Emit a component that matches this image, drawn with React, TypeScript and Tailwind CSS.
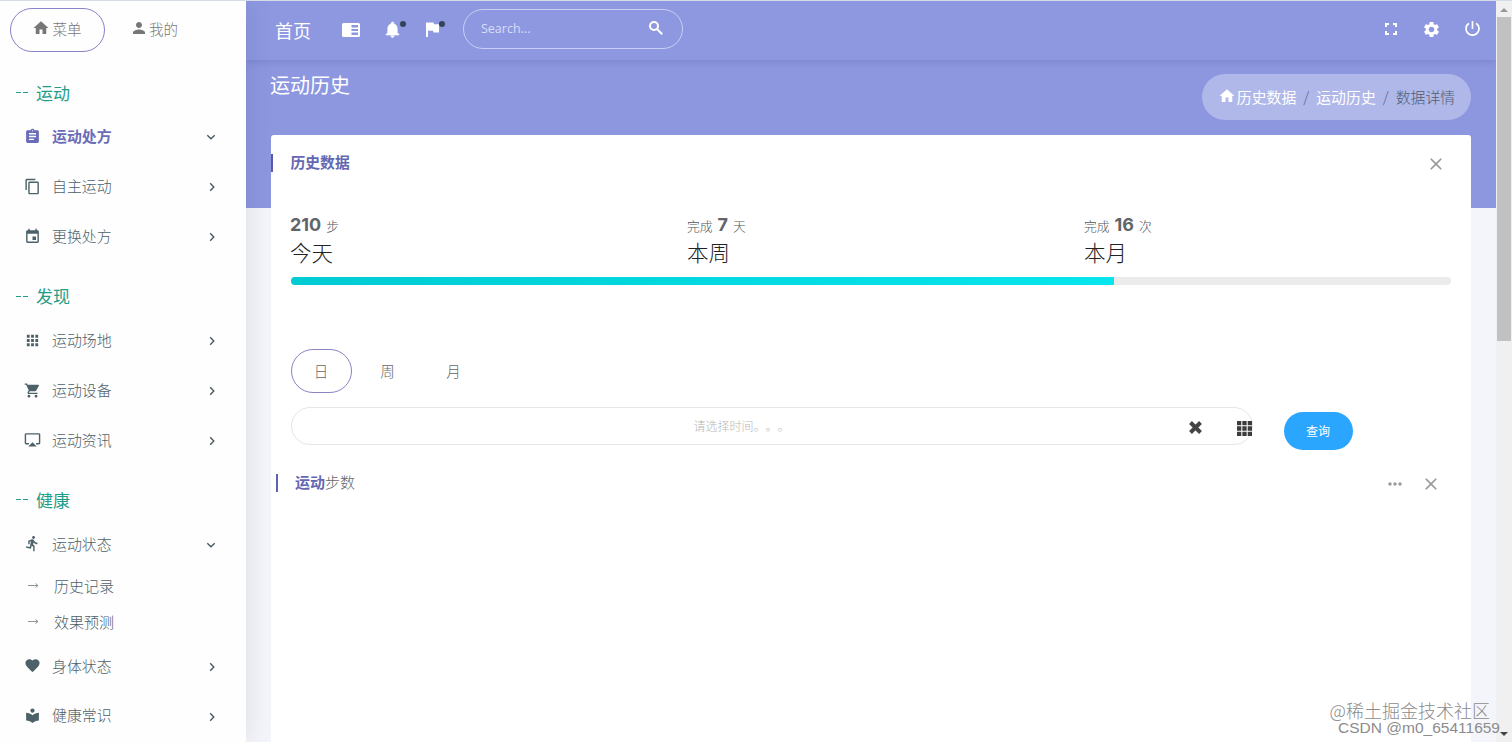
import { ReactNode } from 'react'
import { IconType } from 'react-icons'
import {
  MdAirplay,
  MdApps,
  MdAssignment,
  MdClose,
  MdContentCopy,
  MdDirectionsRun,
  MdEvent,
  MdFavorite,
  MdHome,
  MdLocalLibrary,
  MdMoreHoriz,
  MdNotifications,
  MdPerson,
  MdSettings,
  MdShoppingCart,
} from 'react-icons/md'

type MenuItem = {
  label: string
  icon: IconType
  active?: boolean
  open?: boolean
  children?: string[]
}

type MenuSection = { title: string; items: MenuItem[] }

const sections: MenuSection[] = [
  {
    title: '运动',
    items: [
      { label: '运动处方', icon: MdAssignment, active: true, open: true },
      { label: '自主运动', icon: MdContentCopy },
      { label: '更换处方', icon: MdEvent },
    ],
  },
  {
    title: '发现',
    items: [
      { label: '运动场地', icon: MdApps },
      { label: '运动设备', icon: MdShoppingCart },
      { label: '运动资讯', icon: MdAirplay },
    ],
  },
  {
    title: '健康',
    items: [
      { label: '运动状态', icon: MdDirectionsRun, open: true, children: ['历史记录', '效果预测'] },
      { label: '身体状态', icon: MdFavorite },
      { label: '健康常识', icon: MdLocalLibrary },
    ],
  },
]

const stats = [
  { before: '', value: '210', unit: '步', title: '今天' },
  { before: '完成', value: '7', unit: '天', title: '本周' },
  { before: '完成', value: '16', unit: '次', title: '本月' },
]

const progress = 71

// Small arrow on the right of a menu row
const Chevron = ({ open }: { open?: boolean }) => (
  <svg
    width="10"
    height="10"
    viewBox="0 0 10 10"
    fill="none"
    stroke="#4a5a60"
    strokeWidth="1.4"
    className={open ? 'mr-[30px] mt-[2px]' : 'mr-[29px] mt-[2px]'}
  >
    <path d={open ? 'M1.3 3.2 5 6.8 8.7 3.2' : 'M3.2 1.3 6.8 5 3.2 8.7'} />
  </svg>
)

const MenuRow = ({ item }: { item: MenuItem }) => {
  const Icon = item.icon
  return (
    <li>
      <a
        className={
          item.active
            ? 'flex h-[49.9px] items-center pl-[24px] text-[14.9px] font-bold text-[#6a6cb8]'
            : 'flex h-[49.9px] items-center pl-[24px] text-[14.9px] font-light text-[#4d6169]'
        }
      >
        <Icon size={17} />
        <span className="ml-[11px] flex-1">{item.label}</span>
        <Chevron open={item.open} />
      </a>
      {item.children && (
        <ul>
          {item.children.map((child) => (
            <li key={child} className="flex h-9 items-center pl-[28px] text-[15px] font-light text-[#4d6169]">
              <svg width="11" height="6" viewBox="0 0 11 6" fill="none" stroke="#8a9599" className="-mt-[2px]">
                <path d="M0 2.500h10M7.500 .5 10 2.500 7.500 4.500" />
              </svg>
              <span className="ml-[15px]">{child}</span>
            </li>
          ))}
        </ul>
      )}
    </li>
  )
}

const Sidebar = () => (
  <aside className="relative z-10 h-full w-[246px] shrink-0 bg-[#fefefe] shadow-[0_0_28px_rgba(0,0,0,0.10)]">
    <div className="flex pl-[10px] pt-[7px] text-[14.5px] font-light text-[#777]">
      <a className="flex h-[44px] w-[95px] items-center justify-center rounded-full border border-[#8784c6] pb-[2px] pr-[2px]">
        <MdHome size={18} className="-mt-[2px]" />
        <span className="ml-[3px]">菜单</span>
      </a>
      <a className="ml-[25px] flex h-[44px] items-center pb-[2px]">
        <MdPerson size={18} className="-mt-[2px]" />
        <span className="ml-[1px]">我的</span>
      </a>
    </div>
    <nav className="flex flex-col gap-4 pt-[21.500px]">
      {sections.map((section) => (
        <section key={section.title}>
          <h3 className="flex h-[38px] items-center pl-[16px] text-[17px] font-normal text-[#1f9d89]">
            <span className="flex w-[20px] gap-[2px]">
              <i className="h-px w-[5px] bg-[#1f9d89]" />
              <i className="h-px w-[5px] bg-[#1f9d89]" />
            </span>
            {section.title}
          </h3>
          <ul>
            {section.items.map((item) => (
              <MenuRow key={item.label} item={item} />
            ))}
          </ul>
        </section>
      ))}
    </nav>
  </aside>
)

const Notify = ({ children }: { children: ReactNode }) => (
  <a className="relative flex h-[19px] items-center">
    {children}
    <i className="absolute -right-[4px] top-[1px] size-[6px] rounded-full bg-[#34425a]" />
  </a>
)

const Navbar = () => (
  <header className="flex h-[59px] items-center bg-[#8d98e1] pl-[29px] pr-[14px] text-white shadow-[0_1px_8px_rgba(40,50,120,0.22)]">
    <span className="w-[67px] text-[18px]">首页</span>
    <svg width="18" height="14" viewBox="0 0 18 14" className="-mt-[2px]">
      <path
        fill="#fff"
        fillRule="evenodd"
        d="M1.5 0h15A1.5 1.5 0 0 1 18 1.500v11a1.500 1.500 0 0 1-1.500 1.500h-15A1.500 1.500 0 0 1 0 12.500v-11A1.500 1.500 0 0 1 1.500 0ZM9.500 2v2.500H16V2ZM9.500 6v2H16V6ZM9.500 9.500V12H16V9.500Z"
      />
    </svg>
    <div className="-mt-[3px] ml-[23px] flex">
      <Notify>
        <MdNotifications size={19} stroke="currentColor" strokeWidth={0.8} />
      </Notify>
      <span className="w-[24px]" />
      <Notify>
        <svg width="13" height="15" viewBox="0 0 13 15" fill="#fff" className="mr-[2px] mt-px">
          <path d="M0 .5h7.500L8 2.200h5v8.300H7.500L7 8.800H2V15H0z" />
        </svg>
      </Notify>
    </div>
    <div className="-mt-[3px] ml-[22px] flex h-[40px] w-[220px] items-center rounded-full border border-[#c9cff2] pl-[17px] pr-[19px]">
      <span className="flex-1 pt-px font-['Open_Sans'] text-[12.5px] text-[#d9ddf6]">Search...</span>
      <svg width="14" height="14" viewBox="0 0 14 14" fill="none" stroke="#fff" strokeWidth="2" className="-mt-[3px]">
        <circle cx="5" cy="5" r="4" />
        <path d="m8 8 5.200 5.200" />
      </svg>
    </div>
    <div className="-mt-[4px] ml-auto flex items-center">
      <svg width="12" height="12" viewBox="0 0 12 12" fill="none" stroke="#fff" strokeWidth="2">
        <path d="M1 4V1h3M8 1h3v3M11 8v3H8M4 11H1V8" />
      </svg>
      <MdSettings size={19} className="ml-[25px] mt-[2px]" />
      <svg
        width="15"
        height="15"
        viewBox="0 0 15 15"
        fill="none"
        stroke="#fff"
        strokeWidth="1.7"
        className="ml-[24px] mr-[2px]"
      >
        <path d="M7.500 0v8M4 2.200a6.500 6.500 0 1 0 7 0" />
      </svg>
    </div>
  </header>
)

const PageHeader = () => (
  <div className="flex h-[75px] justify-between pl-[24px] pr-[25px] text-white">
    <h1 className="pt-[10px] text-[20px] font-normal">运动历史</h1>
    <ol className="mt-[14px] flex h-[46px] w-[269px] items-center justify-center rounded-full bg-[#b0b8ea] text-[14.9px] font-light">
      <MdHome size={18} className="-mt-[3px] mr-[1px]" />
      <li className="font-normal">历史数据</li>
      <li className="px-[7px] text-[#56627f]">/</li>
      <li className="font-normal">运动历史</li>
      <li className="px-[7px] text-[#56627f]">/</li>
      <li className="text-[#4f5d70]">数据详情</li>
    </ol>
  </div>
)

const HistoryCard = () => (
  <div className="mx-[25px] h-[607px] rounded-t-[3px] bg-white">
    <div className="flex h-[56px] items-center justify-between pr-[26px]">
      <h2 className="flex items-center pb-px text-[14.8px] font-bold text-[#6468b3]">
        <i className="mr-[18px] mt-px h-[18px] w-[1.5px] bg-[#5a5aa8]" />
        历史数据
      </h2>
      <MdClose size={20} className="-mr-px mt-[2px] text-[#999]" />
    </div>

    {/* Totals for today, this week and this month */}
    <div className="grid grid-cols-[397px_397px_1fr] pl-[19px] pt-[20px]">
      {stats.map((stat) => (
        <div key={stat.title}>
          <p className="flex h-[25px] items-baseline gap-[5px] text-[12.8px] font-light leading-[27px] text-[#4f5558]">
            {stat.before && <span>{stat.before}</span>}
            <b className="font-[Inter] text-[18px] font-bold text-[#5f6568]">{stat.value}</b>
            <span>{stat.unit}</span>
          </p>
          <p className="text-[21.5px] font-light leading-[32px] text-[#222]">{stat.title}</p>
        </div>
      ))}
    </div>
    <div className="ml-[19.5px] mr-[20px] mt-[9px] h-[8px] overflow-hidden rounded-full bg-[#ebebeb]">
      <div className="h-full bg-linear-to-r from-[#00cbd3] to-[#06e6ec]" style={{ width: `${progress}%` }} />
    </div>

    <div className="mt-[64px] flex h-[44px] items-center pl-[19.5px] text-[14.5px] font-light text-[#666]">
      <button className="h-full w-[61px] rounded-full border border-[#8784c6] pb-px">日</button>
      <button className="ml-[3px] w-[66px] pb-px">周</button>
      <button className="w-[66px] pb-px">月</button>
    </div>

    {/* Date picker */}
    <div className="mt-[14px] flex pl-[19.5px]">
      <div className="flex h-[38px] w-[962px] items-center rounded-full border border-[#e6e6e6]">
        <span className="ml-[402px] w-[501px] text-[12px] font-light text-[#b8b8b8] [text-spacing-trim:space-all]">
          请选择时间。。。
        </span>
        <svg width="13" height="13" viewBox="0 0 13 13" stroke="#444" strokeWidth="4" className="mt-[3px] shrink-0">
          <path d="M1.500 1.500l10 10M11.500 1.500l-10 10" />
        </svg>
        <svg width="15" height="15" viewBox="0 0 15 15" fill="#3c3c3c" className="ml-[35px] mt-[4px] shrink-0">
          <path d="M0 0h4.300v4.300H0zM5.350 0h4.300v4.300h-4.300zM10.700 0H15v4.300h-4.300zM0 5.350h4.300v4.300H0zM5.350 5.350h4.300v4.300h-4.300zM10.700 5.350H15v4.300h-4.300zM0 10.700h4.300V15H0zM5.350 10.700h4.300V15h-4.300zM10.700 10.700H15V15h-4.300z" />
        </svg>
      </div>
      <button className="ml-[31px] mt-[5px] h-[38px] w-[69px] rounded-full bg-[#2ba6fe] text-[12px] text-white">
        查询
      </button>
    </div>

    <div className="mt-[15px] flex h-[34px] items-center pl-[5px] pr-[30px] text-[15px] font-light text-[#666]">
      <i className="mr-[17px] mt-[2px] h-[18px] w-[2px] bg-[#5f62b3]" />
      <b className="font-bold text-[#6468b3]">运动</b>
      步数
      <MdMoreHoriz size={20} className="ml-auto mt-[3px] text-[#999]" />
      <MdClose size={20} className="ml-[16px] mt-[3px] text-[#999]" />
    </div>
  </div>
)

const Scrollbar = () => (
  <div className="flex h-full w-[16px] shrink-0 flex-col items-center bg-[#f0f0f0]">
    <svg width="16" height="16" viewBox="0 0 16 16" fill="#999">
      <path d="M4 11 8 7l4 4z" />
    </svg>
    <div className="h-[324px] w-[14px] bg-[#c1c1c1]" />
    <svg width="16" height="16" viewBox="0 0 16 16" fill="#444" className="mt-auto">
      <path d="M4 6 8 10 12 6z" />
    </svg>
  </div>
)

const App = () => {
  return (
    <div className="relative flex h-[742px] w-[1512px] overflow-hidden border-t border-[#d5dbe8] bg-[#f3f5fa] font-['Noto_Sans_CJK_SC',sans-serif]">
      <Sidebar />
      <main className="min-w-0 flex-1 bg-linear-to-b from-[#8d97e0] from-[207px] to-[#f3f5fa] to-[207px]">
        <Navbar />
        <PageHeader />
        <HistoryCard />
      </main>
      <Scrollbar />
      <div className="absolute bottom-[6px] right-[12px] z-20 text-right text-[#8c8c8c]">
        <p className="pr-[10px] text-[18px] font-light leading-[18px]">@稀土掘金技术社区</p>
        <p className="font-['Liberation_Sans'] text-[15.5px] leading-[17px]">CSDN @m0_65411659</p>
      </div>
    </div>
  )
}

export default App
